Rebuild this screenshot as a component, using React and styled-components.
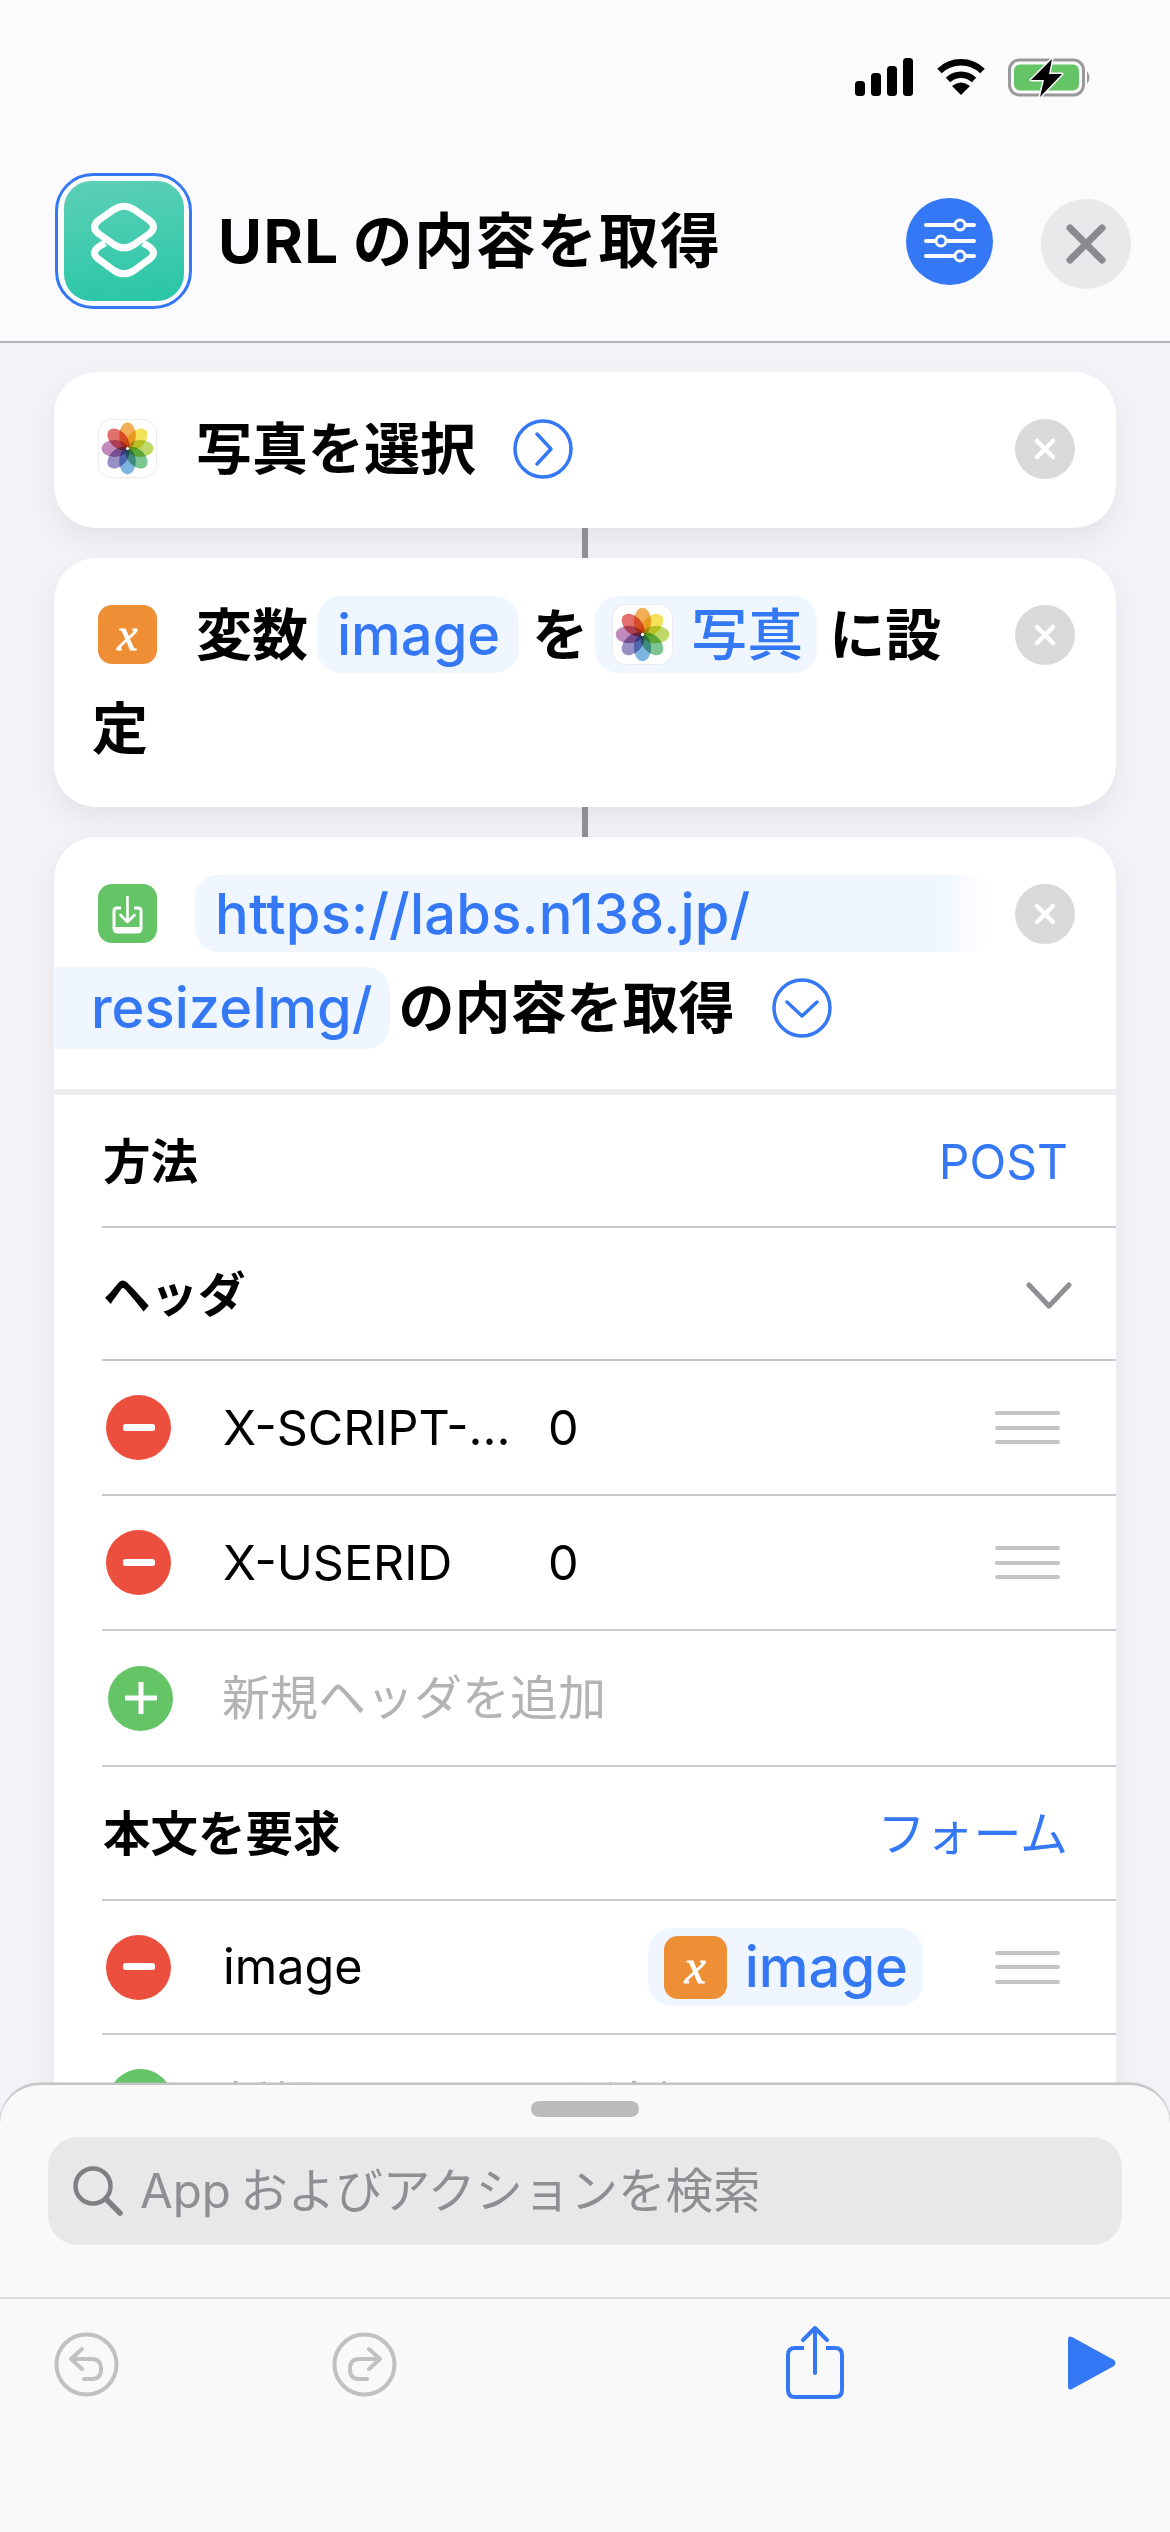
import React from "react";
import styled, { createGlobalStyle } from "styled-components";

const BLUE = "#3478f6";
const FONT = `Inter, "Noto Sans CJK JP", sans-serif`;

const Global = createGlobalStyle`
  html, body { margin: 0; padding: 0; background: #f2f2f7; }
  * { box-sizing: border-box; }
`;

const Page = styled.div`
  position: relative;
  width: 1170px;
  height: 2532px;
  overflow: hidden;
  background: #f2f2f7;
  font-family: ${FONT};
  color: #000;
`;

const Header = styled.header`
  height: 343px;
  background: #fbfbfd;
  border-bottom: 2px solid #b4b4b8;
`;
const StatusBar = styled.div`
  height: 173px;
  padding: 58px 79px 0 0;
  display: flex;
  justify-content: flex-end;
  align-items: flex-start;
`;
const StatusIcon = styled.svg`
  display: block;
  margin-left: ${(p) => p.$ml || 0}px;
`;
const TitleBar = styled.div`
  display: flex;
  align-items: center;
  padding: 0 39px 0 55px;
  height: 136px;
`;
const IconRing = styled.div`
  width: 137px;
  height: 136px;
  flex: none;
  border: 3px solid ${BLUE};
  border-radius: 38px;
  display: flex;
  align-items: center;
  justify-content: center;
`;
const AppIcon = styled.div`
  width: 120px;
  height: 120px;
  border-radius: 27px;
  background: linear-gradient(172deg, #5dd0b6, #28c6a6);
`;
const Title = styled.h1`
  margin: 0 0 0 26px;
  font-size: 60px;
  line-height: 72px;
  font-weight: 700;
  white-space: nowrap;
  letter-spacing: 1.5px;
  word-spacing: -3px;
`;
const RoundButton = styled.div`
  width: ${(p) => p.$size}px;
  height: ${(p) => p.$size}px;
  flex: none;
  border-radius: 50%;
  background: ${(p) => p.$bg};
  margin-left: ${(p) => p.$ml}px;
  margin-top: ${(p) => p.$mt || 0}px;
  display: flex;
  align-items: center;
  justify-content: center;
`;

const List = styled.main`
  padding: 29px 54px 0;
`;
const Card = styled.section`
  background: #fff;
  border-radius: 42px;
  box-shadow: 0 12px 24px rgba(60, 60, 80, 0.08);
  height: ${(p) => p.$h}px;
  padding-top: ${(p) => p.$pt}px;
  overflow: ${(p) => (p.$clip ? "hidden" : "visible")};
`;
const Connector = styled.div`
  width: 6px;
  height: 30px;
  margin: 0 auto;
  background: #8e8e93;
  position: relative;
`;
const ActionLine = styled.div`
  display: flex;
  align-items: center;
  height: ${(p) => p.$h}px;
  margin-top: ${(p) => p.$mt || 0}px;
  padding: 0 41px 0 ${(p) => (p.$pl === undefined ? 44 : p.$pl)}px;
`;
const ActionIcon = styled.div`
  width: ${(p) => p.$size || 59}px;
  height: ${(p) => p.$size || 59}px;
  flex: none;
  border-radius: 14px;
  background: ${(p) => p.$bg};
  display: flex;
  align-items: center;
  justify-content: center;
`;
const PhotoBox = styled.svg`
  display: block;
  flex: none;
  ellipse { mix-blend-mode: multiply; }
`;
const VarGlyph = styled.span`
  font-family: "Liberation Serif", serif;
  font-style: italic;
  font-weight: 400;
  font-size: ${(p) => p.$fs || 46}px;
  line-height: 1.2;
  color: #fff;
  -webkit-text-stroke: 0.8px #fff;
`;
const Words = styled.span`
  font-size: 56px;
  line-height: 66px;
  font-weight: 700;
  white-space: nowrap;
  margin-left: ${(p) => p.$ml || 0}px;
`;
const Chip = styled.span`
  display: inline-flex;
  align-items: center;
  height: ${(p) => p.$h || 77}px;
  flex: none;
  background: #eff6ff;
  border-radius: 24px;
  padding: 0 ${(p) => p.$pr ?? 19}px 0 ${(p) => p.$pl ?? 20}px;
  margin-left: ${(p) => p.$ml || 0}px;
  font-size: 56px;
  line-height: 66px;
  font-weight: 500;
  color: ${BLUE};
  white-space: nowrap;
`;
const FadeChip = styled(Chip)`
  width: 797px;
  letter-spacing: 0.2px;
  background: linear-gradient(90deg, #eff6ff 93%, rgba(239, 246, 255, 0));
`;
const BleedChip = styled(Chip)`
  border-radius: 0 24px 24px 0;
`;
const Push = styled.div`
  margin-left: auto;
  flex: none;
  display: flex;
  align-items: center;
`;
const ChipLabel = styled.span`
  margin-left: ${(p) => p.$ml || 0}px;
`;
const Disclosure = styled.svg`
  display: block;
  flex: none;
  margin-left: ${(p) => p.$ml || 0}px;
`;

const Band = styled.div`
  height: 6px;
  margin-top: ${(p) => p.$mt}px;
  background: #eeeeee;
`;
const SettingRow = styled.div`
  display: flex;
  align-items: center;
  height: ${(p) => p.$h}px;
  margin-left: 48px;
  padding: 0 ${(p) => p.$pr ?? 56}px 0 ${(p) => p.$pl ?? 4}px;
  border-bottom: 2px solid #c9c9cb;
`;
const RowLabel = styled.span`
  font-size: 47.5px;
  font-weight: 700;
  line-height: 60px;
  white-space: nowrap;
  margin-top: 2px;
`;
const RowValue = styled.span`
  margin-left: auto;
  font-size: 48px;
  line-height: 60px;
  color: ${BLUE};
  white-space: nowrap;
  margin-top: 2px;
`;
const Disc = styled.div`
  width: 65px;
  height: 65px;
  flex: none;
  border-radius: 50%;
  background: ${(p) => p.$bg};
  display: flex;
  align-items: center;
  justify-content: center;
  margin-left: ${(p) => p.$ml || 0}px;
`;
const FieldName = styled.span`
  margin-left: ${(p) => p.$ml ?? 52}px;
  width: ${(p) => p.$w || "auto"};
  font-size: 48.5px;
  line-height: 60px;
  white-space: nowrap;
  color: ${(p) => (p.$muted ? "#b3b3b5" : "#000")};
`;
const Placeholder = styled(FieldName)`
  font-size: 48px;
  margin-top: ${(p) => p.$mt || 0}px;
`;
const FieldValue = styled.span`
  font-size: 48.5px;
  line-height: 60px;
`;
const RowChevron = styled.svg`
  display: block;
  margin-top: 5px;
`;
const DragHandle = styled.div`
  width: 65px;
  height: 33px;
  margin-left: ${(p) => p.$ml || "auto"};
  flex: none;
  display: flex;
  flex-direction: column;
  justify-content: space-between;
  i {
    display: block;
    height: 4px;
    border-radius: 2px;
    background: #c4c4c6;
  }
`;
const ValueChip = styled(Chip)`
  margin-left: auto;
  padding: 0 15px 0 16px;
  height: 78px;
`;

const Sheet = styled.div`
  position: absolute;
  left: 0;
  right: 0;
  top: 2083px;
  bottom: 0;
  background: #f9f9f9;
  border-top: 2px solid #c4c4c6;
  border-radius: 40px 40px 0 0;
  box-shadow: 0 0 0 1px rgba(190, 190, 194, 0.5);
  display: flex;
  flex-direction: column;
`;
const Grabber = styled.div`
  width: 108px;
  height: 16px;
  border-radius: 8px;
  background: #bcbcbe;
  margin: 16px auto 0;
`;
const SearchField = styled.div`
  height: 108px;
  margin: 20px 48px 0;
  border-radius: 30px;
  background: #e8e8e9;
  display: flex;
  align-items: center;
  padding-left: 24px;
`;
const SearchText = styled.span`
  margin-left: 16px;
  font-size: 47.5px;
  line-height: 60px;
  color: #8e8e93;
  white-space: nowrap;
  word-spacing: -4px;
`;
const Toolbar = styled.div`
  margin-top: 52px;
  border-top: 2px solid #dedee0;
  flex: 1;
  padding: 27px 0 0 54px;
  display: flex;
  align-items: flex-start;
  background: #f9f9fa;
`;
const ToolIcon = styled.svg`
  display: block;
  flex: none;
  margin-left: ${(p) => p.$ml || 0}px;
  margin-top: ${(p) => p.$mt || 0}px;
`;

const PETALS = [
  [0, "#f0a848"],
  [45, "#f3e04c"],
  [90, "#b9d65a"],
  [135, "#70c086"],
  [180, "#72aede"],
  [225, "#8f87c0"],
  [270, "#bd80b6"],
  [315, "#e0645f"],
];

function Photos({ size = 59 }) {
  return (
    <PhotoBox width={size} height={size} viewBox="0 0 59 59">
      <rect x="0.5" y="0.5" width="58" height="58" rx="13" fill="#fff" stroke="#ececee" />
      {PETALS.map(([a, c]) => (
        <ellipse key={a} cx="29.5" cy="16.6" rx="8.4" ry="13" fill={c} opacity="0.92" transform={`rotate(${a} 29.5 29.5)`} />
      ))}
      <circle cx="29.5" cy="29.5" r="1.6" fill="#fff" />
    </PhotoBox>
  );
}

function Remove() {
  return (
    <RoundButton $size={60} $bg="#d9d9d9" $ml={0}>
      <svg width="28" height="28" viewBox="0 0 28 28">
        <path d="M6 6 L22 22 M22 6 L6 22" stroke="#fff" strokeWidth="4.5" strokeLinecap="round" />
      </svg>
    </RoundButton>
  );
}

function CircleChevron({ dir, ml }) {
  return (
    <Disclosure $ml={ml} width="60" height="60" viewBox="0 0 60 60" fill="none">
      <circle cx="30" cy="30" r="28" stroke={BLUE} strokeWidth="3.5" />
      {dir === "right" ? (
        <path d="M24 15 L38 30 L24 45" stroke={BLUE} strokeWidth="3.5" strokeLinecap="round" strokeLinejoin="round" />
      ) : (
        <path d="M15 24 L30 38 L45 24" stroke={BLUE} strokeWidth="3.5" strokeLinecap="round" strokeLinejoin="round" />
      )}
    </Disclosure>
  );
}

function Minus() {
  return (
    <Disc $bg="#ec4f3d">
      <svg width="32" height="8" viewBox="0 0 32 8">
        <rect width="32" height="7" rx="2.5" fill="#fff" />
      </svg>
    </Disc>
  );
}

function Plus() {
  return (
    <Disc $bg="#65c466" $ml={2}>
      <svg width="32" height="32" viewBox="0 0 32 32">
        <path d="M16 1 V31 M1 16 H31" stroke="#fff" strokeWidth="5" strokeLinecap="round" />
      </svg>
    </Disc>
  );
}

function Handle({ ml }) {
  return (
    <DragHandle $ml={ml}>
      <i />
      <i />
      <i />
    </DragHandle>
  );
}

export default function App() {
  return (
    <Page>
      <Global />
      <Header>
        <StatusBar>
          <StatusIcon width="58" height="38" viewBox="0 0 58 38">
            <rect x="0" y="23" width="10" height="15" rx="3.5" />
            <rect x="16" y="15" width="10" height="23" rx="3.5" />
            <rect x="32" y="8" width="10" height="30" rx="3.5" />
            <rect x="48" y="0" width="10" height="38" rx="3.5" />
          </StatusIcon>
          <StatusIcon $ml={23} width="50" height="38" viewBox="0 0 50 38" fill="none">
            <path d="M3.5 13 A 31 31 0 0 1 46.5 13" stroke="#000" strokeWidth="6.5" />
            <path d="M12 22 A 19 19 0 0 1 38 22" stroke="#000" strokeWidth="6.5" />
            <path d="M25 37 L16 28 Q25 21 34 28 Z" fill="#000" />
          </StatusIcon>
          <StatusIcon $ml={22} width="83" height="40" viewBox="0 0 83 40" fill="none">
            <rect x="1.5" y="2" width="74" height="35" rx="10" stroke="#9a9a9c" strokeWidth="3" />
            <rect x="6" y="6.5" width="65" height="26" rx="6" fill="#65c466" />
            <path d="M79 13 Q84 19.5 79 26 Z" fill="#9a9a9c" />
            <path d="M44 1 L23 22 H36 L32 39 L54 16 H41 Z" fill="#000" stroke="#fbfbfd" strokeWidth="3" strokeLinejoin="round" paintOrder="stroke" />
          </StatusIcon>
        </StatusBar>
        <TitleBar>
          <IconRing>
            <AppIcon>
              <svg width="120" height="120" viewBox="0 0 120 120" fill="none">
                <path d="M50 28.5 Q60 22 70 28.5 L85 39 Q94 46 85 53 L70 63.5 Q60 70 50 63.5 L35 53 Q26 46 35 39 Z" stroke="#fff" strokeWidth="7" />
                <path d="M41 62 L35 65.5 Q26 72 35 78.5 L50 89.5 Q60 96 70 89.5 L85 78.5 Q94 72 85 65.5 L79 62" stroke="#fff" strokeWidth="7" strokeLinejoin="round" />
              </svg>
            </AppIcon>
          </IconRing>
          <Title>URL の内容を取得</Title>
          <Push>
            <RoundButton $size={87} $bg={BLUE} $ml={0}>
              <svg width="52" height="46" viewBox="0 0 52 46" fill="none">
                <path d="M2 7 H50 M2 23 H50 M2 38 H50" stroke="#fff" strokeWidth="4" strokeLinecap="round" />
                <circle cx="36" cy="7" r="5" fill={BLUE} stroke="#fff" strokeWidth="3" />
                <circle cx="17" cy="23" r="5" fill={BLUE} stroke="#fff" strokeWidth="3" />
                <circle cx="36" cy="38" r="5" fill={BLUE} stroke="#fff" strokeWidth="3" />
              </svg>
            </RoundButton>
            <RoundButton $size={90} $bg="#e9e9eb" $ml={48} $mt={6}>
              <svg width="40" height="40" viewBox="0 0 40 40">
                <path d="M4 4 L36 36 M36 4 L4 36" stroke="#8a8a8e" strokeWidth="7" strokeLinecap="round" />
              </svg>
            </RoundButton>
          </Push>
        </TitleBar>
      </Header>

      <List>
        <Card $h={156} $pt={38}>
          <ActionLine $h={77}>
            <Photos />
            <Words $ml={39}>写真を選択</Words>
            <CircleChevron dir="right" ml={37} />
            <Push>
              <Remove />
            </Push>
          </ActionLine>
        </Card>
        <Connector />
        <Card $h={249} $pt={38}>
          <ActionLine $h={77}>
            <ActionIcon $bg="#ee8e35">
              <VarGlyph>x</VarGlyph>
            </ActionIcon>
            <Words $ml={39}>変数</Words>
            <Chip $ml={9}>image</Chip>
            <Words $ml={13}>を</Words>
            <Chip $ml={7} $pl={17} $pr={14}>
              <Photos size={61} />
              <ChipLabel $ml={18}>写真</ChipLabel>
            </Chip>
            <Words $ml={12}>に設</Words>
            <Push>
              <Remove />
            </Push>
          </ActionLine>
          <ActionLine $h={66} $mt={23} $pl={38}>
            <Words>定</Words>
          </ActionLine>
        </Card>
        <Connector />
        <Card $h={1500} $pt={38} $clip>
          <ActionLine $h={77}>
            <ActionIcon $bg="#65c466">
              <svg width="59" height="59" viewBox="0 0 59 59" fill="none">
                <path d="M23 24 H19 Q16 24 16 27 V44 Q16 48 20 48 H39 Q43 48 43 44 V27 Q43 24 40 24 H36" stroke="#fff" strokeWidth="3" />
                <path d="M16 43 H43 V46 Q43 48 39 48 H20 Q16 48 16 46 Z" fill="#fff" />
                <path d="M29.5 13 V38 M22.5 31 L29.5 38 L36.5 31" stroke="#fff" strokeWidth="2.6" strokeLinecap="round" strokeLinejoin="round" />
              </svg>
            </ActionIcon>
            <FadeChip $ml={38} $pl={20}>https://labs.n138.jp/</FadeChip>
            <Push>
              <Remove />
            </Push>
          </ActionLine>
          <ActionLine $h={82} $mt={15} $pl={0}>
            <BleedChip $h={82} $pl={37} $pr={18}>
              resizeImg/
            </BleedChip>
            <Words $ml={8}>の内容を取得</Words>
            <CircleChevron dir="down" ml={38} />
          </ActionLine>
          <Band $mt={40} />
          <SettingRow $h={133} $pl={1} $pr={48}>
            <RowLabel>方法</RowLabel>
            <RowValue>POST</RowValue>
          </SettingRow>
          <SettingRow $h={133} $pl={1} $pr={44}>
            <RowLabel>ヘッダ</RowLabel>
            <Push>
              <RowChevron width="46" height="28" viewBox="0 0 46 28" fill="none">
                <path d="M3 3 L23 24 L43 3" stroke="#8e8e93" strokeWidth="5" strokeLinecap="round" strokeLinejoin="round" />
              </RowChevron>
            </Push>
          </SettingRow>
          <SettingRow $h={135}>
            <Minus />
            <FieldName $w="325px">X-SCRIPT-...</FieldName>
            <FieldValue>0</FieldValue>
            <Handle />
          </SettingRow>
          <SettingRow $h={135}>
            <Minus />
            <FieldName $w="325px">X-USERID</FieldName>
            <FieldValue>0</FieldValue>
            <Handle />
          </SettingRow>
          <SettingRow $h={136}>
            <Plus />
            <Placeholder $ml={49} $muted>
              新規ヘッダを追加
            </Placeholder>
          </SettingRow>
          <SettingRow $h={134} $pl={1} $pr={48}>
            <RowLabel>本文を要求</RowLabel>
            <RowValue>フォーム</RowValue>
          </SettingRow>
          <SettingRow $h={134}>
            <Minus />
            <FieldName>image</FieldName>
            <ValueChip>
              <ActionIcon $size={63} $bg="#ee8e35">
                <VarGlyph $fs={48}>x</VarGlyph>
              </ActionIcon>
              <ChipLabel $ml={18}>image</ChipLabel>
            </ValueChip>
            <Handle ml="72px" />
          </SettingRow>
          <SettingRow $h={134}>
            <Plus />
            <Placeholder $ml={49} $mt={6} $muted>
              新規フィールドを追加
            </Placeholder>
          </SettingRow>
        </Card>
      </List>

      <Sheet>
        <Grabber />
        <SearchField>
          <svg width="52" height="52" viewBox="0 0 52 52" fill="none">
            <circle cx="21" cy="21" r="17.5" stroke="#7f7f84" strokeWidth="4.5" />
            <path d="M34 34 L48 48" stroke="#7f7f84" strokeWidth="5.5" strokeLinecap="round" />
          </svg>
          <SearchText>App およびアクションを検索</SearchText>
        </SearchField>
        <Toolbar>
          <ToolIcon $mt={6} width="65" height="65" viewBox="0 0 65 65" fill="none">
            <circle cx="32.5" cy="32.5" r="30" stroke="#c1c1c3" strokeWidth="4" />
            <path d="M28 17 L17 27 L28 37 M17 27 H38 Q47 27 47 37 Q47 47 38 47 H30" stroke="#c1c1c3" strokeWidth="4" strokeLinecap="round" strokeLinejoin="round" />
          </ToolIcon>
          <ToolIcon $ml={213} $mt={6} width="65" height="65" viewBox="0 0 65 65" fill="none">
            <circle cx="32.5" cy="32.5" r="30" stroke="#c1c1c3" strokeWidth="4" />
            <path d="M37 17 L48 27 L37 37 M48 27 H27 Q18 27 18 37 Q18 47 27 47 H35" stroke="#c1c1c3" strokeWidth="4" strokeLinecap="round" strokeLinejoin="round" />
          </ToolIcon>
          <ToolIcon $ml={389} width="58" height="74" viewBox="0 0 58 74" fill="none">
            <path d="M18 22 H9 Q2 22 2 29 V64 Q2 71 9 71 H49 Q56 71 56 64 V29 Q56 22 49 22 H40" stroke={BLUE} strokeWidth="4" />
            <path d="M29 3 V47 M17 14 L29 2 L41 14" stroke={BLUE} strokeWidth="4" strokeLinecap="round" strokeLinejoin="round" />
          </ToolIcon>
          <ToolIcon $ml={224} $mt={9} width="49" height="56" viewBox="0 0 49 56">
            <path d="M0 5 Q0 0 4 2 L46 25 Q49 28 46 31 L4 54 Q0 56 0 51 Z" fill={BLUE} />
          </ToolIcon>
        </Toolbar>
      </Sheet>
    </Page>
  );
}
